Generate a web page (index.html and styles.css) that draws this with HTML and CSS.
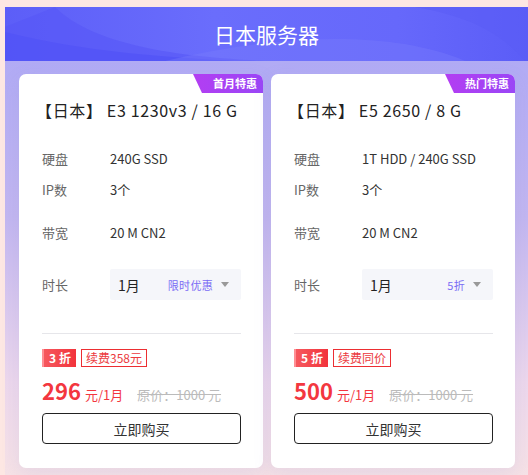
FILE: index.html
```html
<!DOCTYPE html>
<html lang="zh-CN">
<head>
<meta charset="utf-8">
<title>日本服务器</title>
<link rel="stylesheet" href="styles.css">
</head>
<body>
<div class="panel">
  <header class="head">
    <svg class="waves" width="523" height="54" viewBox="0 0 523 54" preserveAspectRatio="none" aria-hidden="true">
      <path d="M50 0 C90 40 180 50 260 54 L0 54 L0 20 Z" fill="#5657f7" opacity="0.6"/>
      <path d="M0 25 C80 45 160 50 230 54 L0 54 Z" fill="#5152f6" opacity="0.7"/>
      <path d="M160 54 C260 30 380 20 460 54 Z" fill="#7b7efc" opacity="0.35"/>
      <path d="M410 0 C470 10 500 30 520 54 L523 54 L523 0 Z" fill="#5a5cf6" opacity="0.5"/>
    </svg>
    <h1 class="head-title">日本服务器</h1>
  </header>
  <div class="cards">
    <section class="card">
      <span class="badge">首月特惠</span>
      <h2 class="card-title">【日本】 E3 1230v3 / 16 G</h2>
      <div class="row row-first"><span class="lbl">硬盘</span><span class="val">240G SSD</span></div>
      <div class="row"><span class="lbl">IP数</span><span class="val">3个</span></div>
      <div class="row row-gap"><span class="lbl">带宽</span><span class="val">20 M CN2</span></div>
      <div class="row row-sel"><span class="lbl">时长</span>
        <div class="select"><span class="sel-val">1月</span><span class="sel-hint">限时优惠</span><span class="caret"></span></div>
      </div>
      <div class="divider"></div>
      <div class="tags"><span class="disc">3 折</span><span class="renew">续费358元</span></div>
      <div class="price"><span class="amount">296</span><span class="unit">元/1月</span><span class="orig">原价：1000 元</span></div>
      <button class="buy">立即购买</button>
    </section>
    <section class="card">
      <span class="badge">热门特惠</span>
      <h2 class="card-title">【日本】 E5 2650 / 8 G</h2>
      <div class="row row-first"><span class="lbl">硬盘</span><span class="val">1T HDD / 240G SSD</span></div>
      <div class="row"><span class="lbl">IP数</span><span class="val">3个</span></div>
      <div class="row row-gap"><span class="lbl">带宽</span><span class="val">20 M CN2</span></div>
      <div class="row row-sel"><span class="lbl">时长</span>
        <div class="select"><span class="sel-val">1月</span><span class="sel-hint">5折</span><span class="caret"></span></div>
      </div>
      <div class="divider"></div>
      <div class="tags"><span class="disc">5 折</span><span class="renew">续费同价</span></div>
      <div class="price"><span class="amount">500</span><span class="unit">元/1月</span><span class="orig">原价：1000 元</span></div>
      <button class="buy">立即购买</button>
    </section>
  </div>
</div>
</body>
</html>
```

FILE: styles.css
```css
* { box-sizing: border-box; }
html, body { margin: 0; padding: 0; }
body {
  background: #fde7e3;
  font-family: "Noto Sans CJK SC", "Noto Sans", sans-serif;
  overflow: hidden;
  height: 475px;
}
.panel {
  margin: 7px 0 0 5px;
  width: 523px;
  background: linear-gradient(180deg, #aba7f6 0%, #c2b6f0 45%, #ecd7ec 80%, #f6e2e6 100%);
}
.head {
  position: relative;
  height: 54px;
  background: linear-gradient(90deg, #5c5ef8 0%, #6a6dfc 40%, #6668fb 75%, #5b5df7 100%);
  display: flex;
  align-items: center;
  justify-content: center;
  overflow: hidden;
}
.waves { position: absolute; left: 0; top: 0; }
.head-title {
  position: relative;
  margin: 0;
  font-size: 21px;
  font-weight: 400;
  color: #ffffff;
  line-height: 28px;
}
.cards {
  display: grid;
  grid-template-columns: 244px 244px;
  gap: 8px;
  padding: 13px 0 7px 14px;
}
.card {
  position: relative;
  background: #ffffff;
  border-radius: 7px;
  padding: 24px 22px 24px 23px;
  box-shadow: 0 6px 18px rgba(140, 140, 210, 0.15);
}
.badge {
  position: absolute;
  top: 0;
  right: 0;
  width: 70px;
  height: 19px;
  border-top-right-radius: 7px;
  background: linear-gradient(90deg, #b33ef2, #9a46f6);
  clip-path: polygon(0 0, 100% 0, 100% 100%, 9px 100%);
  color: #fff;
  font-size: 11px;
  font-weight: 700;
  line-height: 19px;
  text-align: right;
  padding-right: 6px;
}
.card-title {
  margin: 0 0 21px -6px;
  font-size: 16px;
  font-weight: 400;
  line-height: 24px;
  letter-spacing: 0.65px;
  color: #222;
  white-space: nowrap;
}
.row {
  display: flex;
  align-items: center;
  height: 31px;
  font-size: 13px;
}
.row-gap { margin-top: 12px; }
.row-sel { margin-top: 21px; }
.lbl { width: 68px; color: #666; flex: none; }
.val { color: #333; }
.select {
  width: 131px;
  height: 31px;
  background: #f5f6fa;
  border-radius: 2px;
  display: flex;
  align-items: center;
  padding: 0 12px 0 8px;
}
.sel-val { font-size: 14px; color: #222; flex: 1; }
.sel-hint { font-size: 11px; letter-spacing: 0.3px; color: #7a6cf5; }
.caret {
  width: 0; height: 0;
  margin-left: 8px;
  border-left: 4px solid transparent;
  border-right: 4px solid transparent;
  border-top: 5px solid #999;
}
.divider {
  height: 1px;
  background: #e6e6ea;
  margin-top: 33px;
}
.tags {
  display: flex;
  gap: 5px;
  margin-top: 15px;
  height: 18px;
}
.disc {
  width: 34px;
  height: 18px;
  border-left: 2px solid #ff8f94;
  background: linear-gradient(90deg, #f6585e, #f2333b);
  color: #fff;
  font-size: 12px;
  font-weight: 700;
  line-height: 18px;
  text-align: center;
}
.renew {
  height: 18px;
  border: 1px solid #ec2e32;
  color: #ec3a3e;
  font-size: 12px;
  line-height: 16px;
  padding: 0 4px;
}
.price {
  display: flex;
  align-items: baseline;
  height: 30px;
  margin-top: 8px;
  white-space: nowrap;
}
.amount {
  font-size: 22px;
  font-weight: 700;
  color: #f3373f;
  line-height: 30px;
}
.unit {
  font-size: 13px;
  color: #f3373f;
  margin-left: 4px;
}
.orig {
  font-size: 13px;
  color: #bbb;
  text-decoration: line-through;
  margin-left: 14px;
}
.buy {
  display: block;
  width: 199px;
  height: 31px;
  margin-top: 8px;
  background: #fff;
  border: 1px solid #222;
  border-radius: 4px;
  font-family: "Noto Sans CJK SC", "Noto Sans", sans-serif;
  font-size: 14px;
  color: #333;
  padding: 0;
}
```
